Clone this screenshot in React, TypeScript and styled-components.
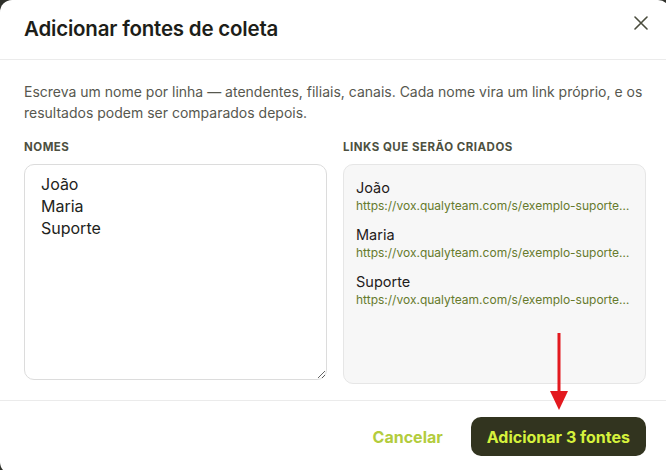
import styled, { createGlobalStyle } from 'styled-components';

const GlobalStyle = createGlobalStyle`
  html, body {
    margin: 0;
    padding: 0;
    background: #2f302a;
    overflow: hidden;
  }
  * {
    box-sizing: border-box;
  }
`;

const names = ['João', 'Maria', 'Suporte'];
const baseUrl = 'https://vox.qualyteam.com/s/exemplo-suporte';

const slug = (name: string) =>
  name
    .normalize('NFD')
    .replace(/[\u0300-\u036f]/g, '')
    .toLowerCase();

const Modal = styled.div`
  position: relative;
  width: 670px;
  background: #ffffff;
  border-radius: 12px;
  font-family: Inter, 'Noto Sans', sans-serif;
  color: #1e1f1a;
`;

const Header = styled.header`
  display: flex;
  align-items: center;
  justify-content: space-between;
  height: 60px;
  padding: 0 17px 2px 24px;
  border-bottom: 1px solid #ebebeb;
`;

const Title = styled.h2`
  margin: 0;
  font-size: 20.5px;
  font-weight: 600;
  letter-spacing: -0.2px;
  color: #1d1e19;
`;

const CloseButton = styled.button`
  display: flex;
  align-items: center;
  justify-content: center;
  width: 24px;
  height: 24px;
  margin-top: -12px;
  padding: 0;
  border: 0;
  background: none;
  color: #4a4c3d;
  cursor: pointer;
`;

const Body = styled.div`
  padding: 21px 24px 16px;
`;

const Description = styled.p`
  margin: 0 0 17px;
  font-size: 14px;
  line-height: 21px;
  color: #57584f;
`;

const Columns = styled.div`
  display: grid;
  grid-template-columns: minmax(0, 1fr) minmax(0, 1fr);
  gap: 16px;
`;

const Field = styled.div`
  display: flex;
  flex-direction: column;
  gap: 10px;
  min-width: 0;
`;

const Label = styled.span`
  font-size: 11.5px;
  line-height: 14px;
  font-weight: 700;
  letter-spacing: 0.5px;
  text-transform: uppercase;
  color: #4d5040;
`;

const NamesInput = styled.textarea`
  height: 216px;
  padding: 8px 16px;
  border: 1px solid #dcdcdc;
  border-radius: 10px;
  font-family: inherit;
  font-size: 16px;
  line-height: 22px;
  color: #222320;
  resize: vertical;
  outline: none;
`;

const Preview = styled.div`
  display: flex;
  flex-direction: column;
  gap: 11px;
  height: 220px;
  padding: 13px 12px;
  background: #f7f7f7;
  border: 1px solid #e6e6e6;
  border-radius: 10px;
`;

const LinkItem = styled.div`
  display: flex;
  flex-direction: column;
  min-width: 0;
`;

const LinkName = styled.span`
  font-size: 14.5px;
  line-height: 19px;
  color: #1f201b;
`;

const LinkUrl = styled.span`
  font-size: 12px;
  line-height: 17px;
  color: #667a2c;
  white-space: nowrap;
  overflow: hidden;
  text-overflow: ellipsis;
`;

const Footer = styled.footer`
  display: flex;
  justify-content: flex-end;
  align-items: center;
  gap: 12px;
  padding: 16px 24px 18px;
  border-top: 1px solid #ebebeb;
`;

const Button = styled.button<{ $primary?: boolean }>`
  height: 39px;
  padding: 0 16px;
  border: 0;
  border-radius: 10px;
  font-family: inherit;
  font-size: 16px;
  font-weight: 700;
  cursor: pointer;
  background: ${(p) => (p.$primary ? '#32341f' : 'transparent')};
  color: ${(p) => (p.$primary ? '#d6f23c' : '#b3cc3d')};
`;

// callout arrow pointing at the confirm button
const Pointer = styled.svg`
  position: absolute;
  left: 549px;
  top: 333px;
  pointer-events: none;
`;

const CloseIcon = () => (
  <svg width="14" height="14" viewBox="0 0 14 14" fill="none">
    <path d="M1 1l12 12M13 1L1 13" stroke="currentColor" strokeWidth="1.6" strokeLinecap="round" />
  </svg>
);

export default function App() {
  return (
    <>
      <GlobalStyle />
      <Modal>
        <Header>
          <Title>Adicionar fontes de coleta</Title>
          <CloseButton aria-label="Fechar">
            <CloseIcon />
          </CloseButton>
        </Header>
        <Body>
          <Description>
            Escreva um nome por linha — atendentes, filiais, canais. Cada nome vira um link próprio, e os
            resultados podem ser comparados depois.
          </Description>
          <Columns>
            <Field>
              <Label>Nomes</Label>
              <NamesInput defaultValue={names.join('\n')} spellCheck={false} />
            </Field>
            <Field>
              <Label>Links que serão criados</Label>
              <Preview>
                {names.map((name) => (
                  <LinkItem key={name}>
                    <LinkName>{name}</LinkName>
                    <LinkUrl>{`${baseUrl}-${slug(name)}`}</LinkUrl>
                  </LinkItem>
                ))}
              </Preview>
            </Field>
          </Columns>
        </Body>
        <Footer>
          <Button>Cancelar</Button>
          <Button $primary>Adicionar 3 fontes</Button>
        </Footer>
        <Pointer width="20" height="78" viewBox="0 0 20 78">
          <rect x="8.5" y="0" width="3" height="62" fill="#e3191f" />
          <path d="M1 58h18l-9 19z" fill="#e3191f" />
        </Pointer>
      </Modal>
    </>
  );
}
